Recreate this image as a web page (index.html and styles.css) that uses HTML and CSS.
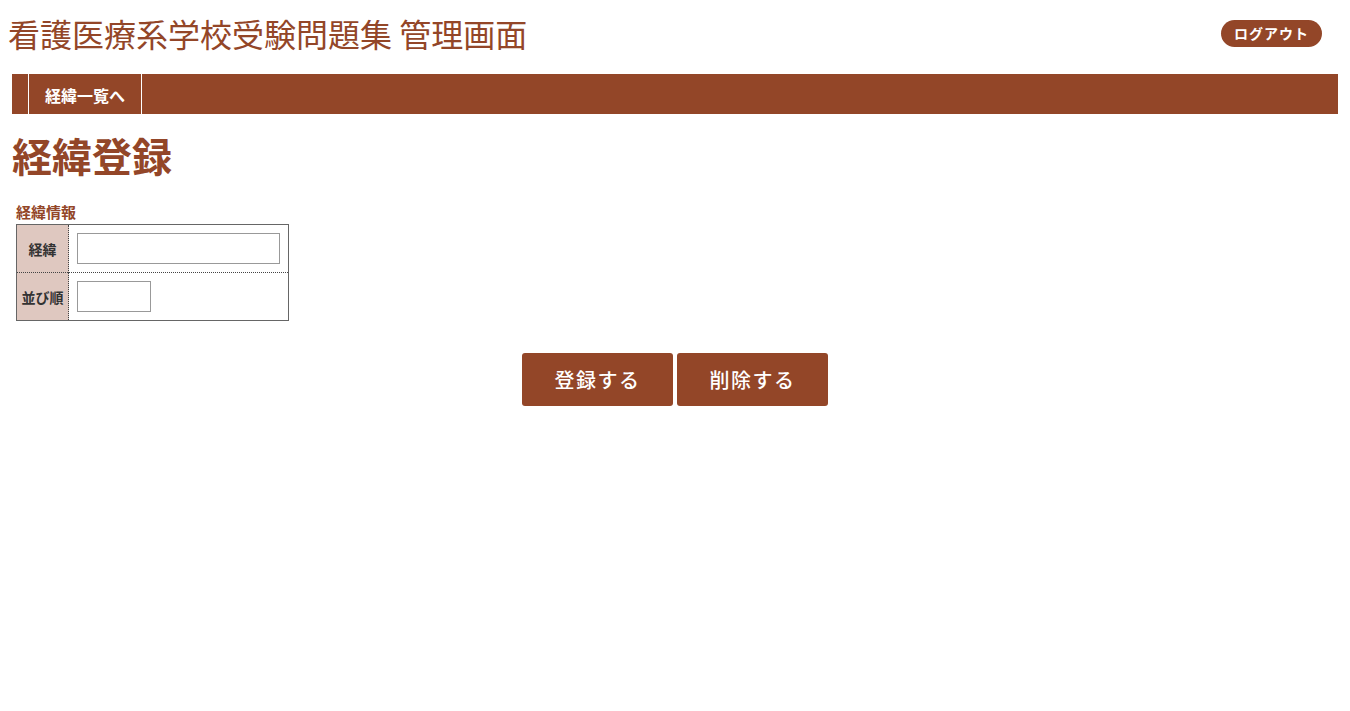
FILE: index.html
```html
<!DOCTYPE html>
<html lang="ja">
<head>
<meta charset="utf-8">
<title>経緯登録</title>
<link rel="stylesheet" href="styles.css">
</head>
<body>
<header class="header">
  <h1 class="site-title">看護医療系学校受験問題集 管理画面</h1>
  <a class="logout" href="#">ログアウト</a>
</header>
<nav class="nav">
  <ul class="nav-list">
    <li class="nav-item"><a href="#">経緯一覧へ</a></li>
  </ul>
</nav>
<main class="main">
  <h2 class="page-title">経緯登録</h2>
  <section class="form-section">
    <h3 class="section-title">経緯情報</h3>
    <table class="form-table">
      <tr>
        <th>経緯</th>
        <td><input class="input-wide" type="text"></td>
      </tr>
      <tr>
        <th>並び順</th>
        <td><input class="input-short" type="text"></td>
      </tr>
    </table>
  </section>
  <div class="actions">
    <button class="btn" type="button">登録する</button>
    <button class="btn" type="button">削除する</button>
  </div>
</main>
</body>
</html>
```

FILE: styles.css
```css
* { box-sizing: border-box; }
body {
  margin: 0;
  font-family: "Noto Sans CJK JP", "Noto Sans", sans-serif;
  color: #333;
  background: #fff;
}
.header {
  display: flex;
  justify-content: space-between;
  align-items: flex-start;
  padding: 10px 28px 0 8px;
  height: 74px;
}
.site-title {
  margin: 0;
  font-size: 32px;
  font-weight: 400;
  line-height: 46px;
  color: #934628;
}
.logout {
  margin-top: 10px;
  display: block;
  width: 101px;
  height: 27px;
  line-height: 27px;
  text-align: center;
  background: #934628;
  color: #fff;
  font-size: 14px;
  font-weight: 700;
  letter-spacing: 1px;
  border-radius: 14px;
  text-decoration: none;
}
.nav {
  margin: 0 12px;
  height: 40px;
  background: #934628;
  padding-left: 16px;
}
.nav-list {
  list-style: none;
  margin: 0;
  padding: 0;
  display: flex;
  height: 100%;
}
.nav-item {
  border-left: 1px solid #fff;
  border-right: 1px solid #fff;
}
.nav-item a {
  display: block;
  width: 112px;
  height: 40px;
  line-height: 42px;
  text-align: center;
  color: #fff;
  font-size: 16px;
  font-weight: 700;
  text-decoration: none;
}
.main {
  padding: 0 12px;
}
.page-title {
  margin: 14px 0 0;
  font-size: 40px;
  font-weight: 700;
  line-height: 54px;
  color: #934628;
}
.form-section {
  margin-top: 20px;
  padding-left: 4px;
}
.section-title {
  margin: 0 0 2px;
  font-size: 15px;
  font-weight: 700;
  line-height: 20px;
  color: #934628;
}
.form-table {
  border-collapse: collapse;
  border: 1px solid #666;
  width: 273px;
}
.form-table th {
  width: 52px;
  height: 48px;
  padding: 0;
  background: #dfc8c0;
  font-size: 14px;
  font-weight: 700;
  color: #333;
  text-align: center;
  border-right: 1px dotted #444;
}
.form-table tr + tr th,
.form-table tr + tr td {
  border-top: 1px dotted #444;
}
.form-table td {
  padding: 0 8px;
  vertical-align: middle;
}
.form-table input {
  display: block;
  height: 31px;
  border: 1px solid #999;
  padding: 2px 4px;
  font-size: 14px;
  font-family: inherit;
}
.input-wide { width: 203px; }
.input-short { width: 74px; }
.actions {
  margin-top: 32px;
  display: flex;
  justify-content: center;
  gap: 4px;
}
.btn {
  width: 151px;
  height: 53px;
  background: #934628;
  color: #fff;
  border: none;
  border-radius: 3px;
  font-family: inherit;
  font-size: 20px;
  font-weight: 500;
  letter-spacing: 1.5px;
}
```
